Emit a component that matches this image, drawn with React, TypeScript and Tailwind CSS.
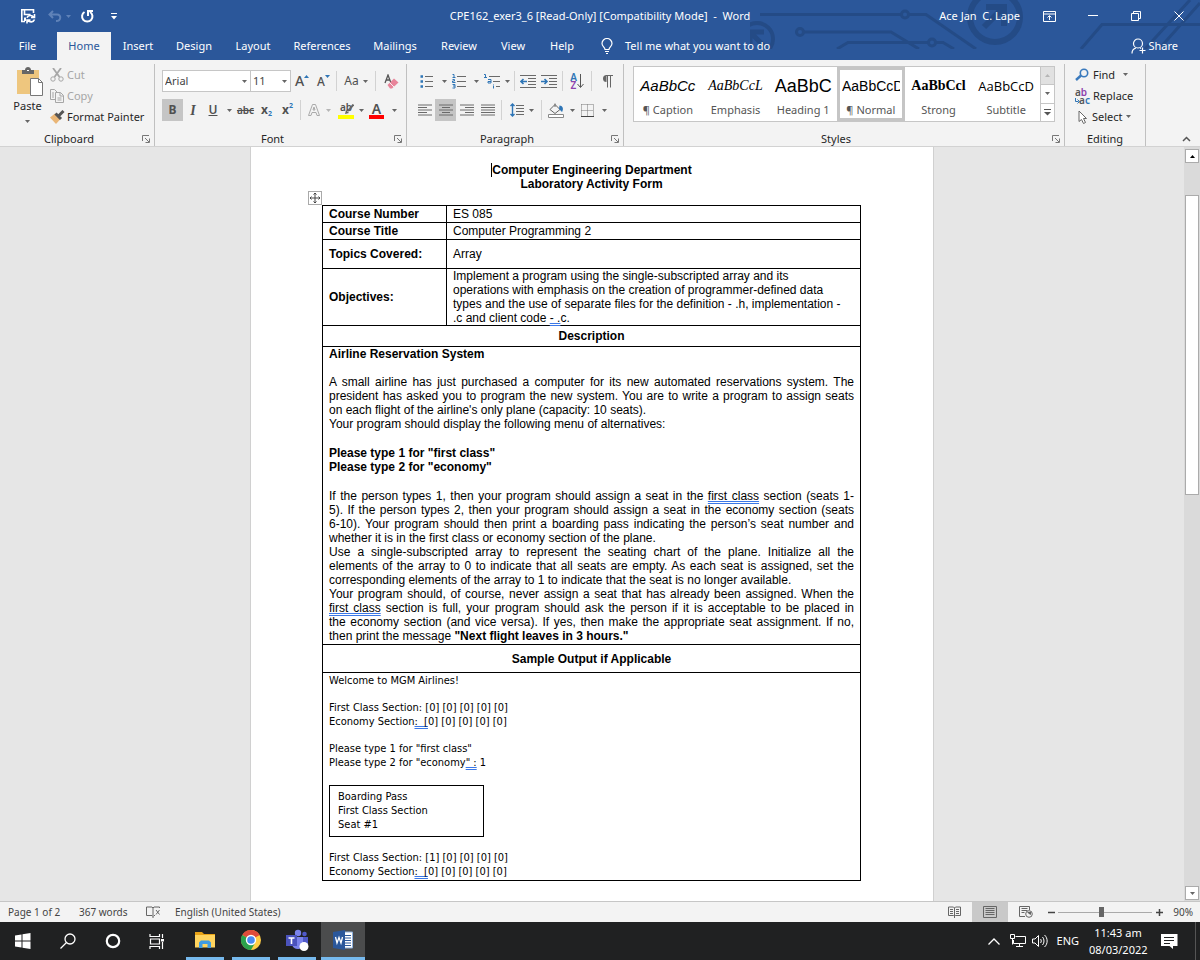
import type { ReactNode } from "react";

const tabs = [
  { label: "File", width: "w-[57px] pr-[2px]" },
  { label: "Home", width: "w-[54px]", active: true },
  { label: "Insert", width: "w-[54px]" },
  { label: "Design", width: "w-[58px]" },
  { label: "Layout", width: "w-[60px]" },
  { label: "References", width: "w-[78px]" },
  { label: "Mailings", width: "w-[68px]" },
  { label: "Review", width: "w-[60px]" },
  { label: "View", width: "w-12" },
  { label: "Help", width: "w-[50px]" },
];

const styles = [
  { name: "¶ Caption", sample: "AaBbCc", font: "font-['Liberation_Sans'] text-[15px] italic" },
  { name: "Emphasis", sample: "AaBbCcL", font: "font-['Liberation_Serif'] text-[14px] italic" },
  { name: "Heading 1", sample: "AaBbC", font: "font-['Liberation_Sans'] text-[18px]" },
  { name: "¶ Normal", sample: "AaBbCcD", font: "font-['Liberation_Sans'] text-[14px]", active: true },
  { name: "Strong", sample: "AaBbCcl", font: "font-['Liberation_Serif'] text-[14px] font-bold" },
  { name: "Subtitle", sample: "AaBbCcD", font: "font-['Open_Sans'] text-[13px] text-[#404040]" },
];

function Icon({
  w,
  h,
  children,
  className = "",
}: {
  w: number;
  h: number;
  children: ReactNode;
  className?: string;
}) {
  return (
    <svg
      width={w}
      height={h}
      viewBox={`0 0 ${w} ${h}`}
      fill="none"
      stroke="currentColor"
      aria-hidden="true"
      className={`shrink-0 ${className}`}
    >
      {children}
    </svg>
  );
}

function Caret({ className = "text-[#666]" }: { className?: string }) {
  return (
    <Icon w={5} h={3} className={className}>
      <path d="M0 0h5L2.500 3z" fill="currentColor" stroke="none" />
    </Icon>
  );
}

function Tool({
  label,
  className,
  children,
}: {
  label: string;
  className: string;
  children: ReactNode;
}) {
  return (
    <button
      type="button"
      aria-label={label}
      className={`flex h-[22px] shrink-0 items-center justify-center ${className}`}
    >
      {children}
    </button>
  );
}

function Divider({ className = "mx-[2px]" }: { className?: string }) {
  return <span className={`h-5 w-px shrink-0 bg-[#d2d2d2] ${className}`} />;
}

function Group({
  title,
  className,
  launcher = true,
  children,
}: {
  title: string;
  className: string;
  launcher?: boolean;
  children: ReactNode;
}) {
  return (
    <section className={`flex flex-col justify-between border-r border-[#c0c0c0] ${className}`}>
      {children}
      <div className="flex h-[14px] items-center">
        <h2 className="flex-1 text-center text-[11px] leading-[14px] text-[#262626]">{title}</h2>
        {launcher && (
          <button type="button" aria-label={`${title} settings`} className="flex w-4 justify-center">
            <Icon w={8} h={8} className="text-[#777]">
              <path d="M.5 6V.5H7M3 3l4 4M7.500 3.500v4h-4" />
            </Icon>
          </button>
        )}
      </div>
    </section>
  );
}

// text lines of an alignment icon, each given as [start, end]
function Lines({ rows }: { rows: number[][] }) {
  return (
    <Icon w={14} h={12} className="text-[#6a6a6a]">
      {rows.map(([a, b], i) => (
        <path key={i} d={`M${a} ${i * 2.5 + 1}H${b}`} />
      ))}
    </Icon>
  );
}

function Circuit() {
  return (
    <svg
      viewBox="0 0 450 49"
      width="450"
      height="49"
      fill="none"
      stroke="#244b86"
      strokeWidth="3"
      aria-hidden="true"
      className="pointer-events-none absolute top-0 right-0"
    >
      <circle cx="7" cy="39" r="16" strokeWidth="4" />
      <path d="M1 33l14 14M0 45V32h14" strokeWidth="5" />
      <path d="M10 14.500H151M159 14.500H176L226 49" />
      <circle cx="155" cy="14.500" r="3.500" />
      <circle cx="50" cy="32" r="3.500" />
      <path d="M54 32H141L169 49M87 49L98 42.500H178M186 42.500H193L204 49" />
      <circle cx="182" cy="42.500" r="3.500" />
      <circle cx="245" cy="17" r="25" strokeWidth="6" />
      <path d="M234 27L254 7M236 7H254V26" strokeWidth="6" />
      <path d="M331 49L352 24.500H450M395 49L440 0M409 49L450 3" />
    </svg>
  );
}

function TitleBar() {
  return (
    <div className="relative grid h-8 grid-cols-[1fr_auto_1fr] items-center text-[11px] text-white">
      <div className="flex items-center pl-5">
        <button type="button" aria-label="Save">
          <Icon w={16} h={16}>
            <path d="M5 13.500H1.800V1.800H13.500V5M4.500 2v4.500h6" strokeWidth="1.600" />
            <path d="M4 9.500h2V13H4z" fill="currentColor" stroke="none" />
            <path d="M7 9.800c1-3 5-3 6.500-.8M14.500 6v3.500H11M14.500 11.500c-1 3-5 3-6.500.8M7 15.500V12h3.500" strokeWidth="1.600" />
          </Icon>
        </button>
        <button type="button" aria-label="Undo" className="ml-3 flex items-center gap-1 text-[#5f82b8]">
          <Icon w={14} h={12}>
            <path d="M5 1L1.500 4.500 5 8M1.500 4.500H9c4.500 0 4.500 6.500-1 6.500" strokeWidth="2" />
          </Icon>
          <Caret className="text-[#5f82b8]" />
        </button>
        <button type="button" aria-label="Repeat" className="ml-[9px]">
          <Icon w={14} h={14}>
            <path d="M4.500 3A5.200 5.200 0 1 0 10 3M8 7V2h5" strokeWidth="2" />
          </Icon>
        </button>
        <button type="button" aria-label="Customize quick access" className="ml-[17px]">
          <Icon w={6} h={7}>
            <path d="M0 .5h6" />
            <path d="M0 3h6L3 6.500z" fill="currentColor" stroke="none" />
          </Icon>
        </button>
      </div>
      <h1 className="whitespace-pre">CPE162_exer3_6 [Read-Only] [Compatibility Mode]  -  Word</h1>
      <div className="flex items-center justify-end">
        <span className="mr-2 whitespace-pre">Ace Jan  C. Lape</span>
        <button type="button" aria-label="Ribbon display options" className="flex w-[43px] justify-center">
          <Icon w={13} h={11}>
            <path d="M.5.5h12v10H.5zM.5 3h12M6.500 9V5M4.500 6.500l2-2 2 2" />
          </Icon>
        </button>
        <button type="button" aria-label="Minimize" className="flex w-[43px] justify-center">
          <Icon w={10} h={10}>
            <path d="M0 4.500h10" />
          </Icon>
        </button>
        <button type="button" aria-label="Restore" className="flex w-[43px] justify-center">
          <Icon w={10} h={10}>
            <path d="M.5 2.500h7v7h-7zM2.500 2.500v-2h7v7h-2" />
          </Icon>
        </button>
        <button type="button" aria-label="Close" className="flex w-[43px] justify-center">
          <Icon w={10} h={10}>
            <path d="M.5.5l9 9M9.500.5l-9 9" />
          </Icon>
        </button>
      </div>
    </div>
  );
}

function TabRow() {
  return (
    <nav className="relative flex h-7 items-stretch text-[11px] text-white">
      {tabs.map((tab) => (
        <button
          key={tab.label}
          type="button"
          className={`${tab.width} ${tab.active ? "bg-[#f3f3f3] text-[#2b579a]" : ""}`}
        >
          {tab.label}
        </button>
      ))}
      <button type="button" className="ml-[14px] flex items-center gap-3">
        <Icon w={12} h={16}>
          <path d="M4 11.500C4 9 1 8.500 1 5.500a5 5 0 0 1 10 0c0 3-3 3.500-3 6zM4 13.500h4M5 15.500h2" strokeWidth="1.200" />
        </Icon>
        Tell me what you want to do
      </button>
      <button type="button" className="mr-[22px] ml-auto flex items-center gap-[2px]">
        <Icon w={15} h={16}>
          <circle cx="7" cy="5.500" r="4.500" strokeWidth="1.200" />
          <path d="M1 15.500c0-3 2-5 4-5.500M9 10l1 .5M11.500 9.500v6M8.500 12.500h6" strokeWidth="1.200" />
        </Icon>
        Share
      </button>
    </nav>
  );
}

function ClipboardGroup() {
  return (
    <Group title="Clipboard" className="w-[155px] shrink-0">
      <div className="flex pl-3">
        <button type="button" className="flex w-[31px] flex-col items-center pt-[3px] text-[11px] leading-[14px]">
          <Icon w={28} h={30} className="ml-1">
            <path d="M1 3h22v24H1z" fill="#eec67e" stroke="none" />
            <path d="M6 7V3h3c0-4 6-4 6 0h3v4z" fill="#666" stroke="none" />
            <path d="M11 3.500h2" stroke="#fff" />
            <path d="M14.500 11.500h8l4 4v13h-12z" fill="#fff" stroke="#777" />
            <path d="M22.500 11.500v4h4" stroke="#777" />
          </Icon>
          <span className="mt-[2px]">Paste</span>
          <span className="flex h-3 items-center pt-1">
            <Caret />
          </span>
        </button>
        <div className="flex flex-col pl-[7px] text-[11px] leading-[21px]">
          <button type="button" className="flex items-center gap-[3px] text-[#a6a6a6]">
            <Icon w={14} h={14}>
              <path d="M3 0l6.500 9M11 0L4.500 9" strokeWidth="1.800" />
              <circle cx="3" cy="11" r="2.200" />
              <circle cx="11" cy="11" r="2.200" />
            </Icon>
            Cut
          </button>
          <button type="button" className="flex items-center gap-[3px] text-[#a6a6a6]">
            <Icon w={14} h={14}>
              <path d="M5 10.500H.5V.5h4l3 3M2 4h2M2 6h2M2 8h2M5.500 3.500h5l3 3v7h-8zM10 3.500V7h3.500M7.500 9h4M7.500 11h4" />
            </Icon>
            Copy
          </button>
          <button type="button" className="flex items-center gap-[2px] whitespace-nowrap text-[#262626]">
            <Icon w={15} h={14}>
              <path d="M5 3.500L10.500 9 6 14 0 7.500z" fill="#eab676" stroke="none" />
              <path d="M5.500 3.500l5.500 5.500M9 5.500L13.500 1" stroke="#555" strokeWidth="3" />
            </Icon>
            Format Painter
          </button>
        </div>
      </div>
    </Group>
  );
}

function FontGroup() {
  return (
    <Group title="Font" className="w-[252px] shrink-0">
      <div className="flex flex-col gap-[7px] pt-[6px] pl-[7px] text-[#505050]">
        <div className="flex items-center">
          <div className="relative flex">
            <select
              aria-label="Font"
              className="h-[22px] w-[89px] appearance-none border border-[#c6c6c6] bg-white px-[2px] text-[11px] text-[#444]"
            >
              <option>Arial</option>
            </select>
            <span className="pointer-events-none absolute top-[10px] right-1">
              <Caret />
            </span>
          </div>
          <div className="relative -ml-px flex">
            <select
              aria-label="Font size"
              className="h-[22px] w-[41px] appearance-none border border-[#c6c6c6] bg-white px-[2px] text-[11px] text-[#444]"
            >
              <option>11</option>
            </select>
            <span className="pointer-events-none absolute top-[10px] right-1">
              <Caret />
            </span>
          </div>
          <Tool label="Grow font" className="w-[22px]">
            <span className="text-[14px] leading-none font-medium">A</span>
            <Icon w={5} h={12}>
              <path d="M0 3h5L2.500 0z" fill="#2e75b6" stroke="none" />
            </Icon>
          </Tool>
          <Tool label="Shrink font" className="w-[21px]">
            <span className="pt-[2px] text-[12px] leading-none font-medium">A</span>
            <Icon w={5} h={12}>
              <path d="M0 0h5L2.500 3z" fill="#2e75b6" stroke="none" />
            </Icon>
          </Tool>
          <Divider />
          <Tool label="Change case" className="w-[34px] gap-1 text-[12px]">
            Aa
            <Caret />
          </Tool>
          <Divider />
          <Tool label="Clear formatting" className="w-[26px]">
            <Icon w={15} h={15}>
              <path d="M1 9l3-8 3 8M2 6h4" stroke="#555" strokeWidth="1.300" />
              <path d="M3.500 11L10 4.500l4.500 4L8 14.500H6z" fill="#e8849a" stroke="none" />
              <path d="M5.500 8.500l4.500 4.500" stroke="#f3f3f3" />
            </Icon>
          </Tool>
        </div>
        <div className="flex items-center">
          <Tool label="Bold" className="w-[21px] bg-[#c5c5c5] text-[12px] font-bold">
            B
          </Tool>
          <Tool label="Italic" className="w-5 font-['Liberation_Serif'] text-[14px] font-bold italic">
            I
          </Tool>
          <Tool label="Underline" className="w-5 text-[12px] font-semibold underline">
            U
          </Tool>
          <Tool label="Underline style" className="w-3">
            <Caret />
          </Tool>
          <Tool label="Strikethrough" className="w-[21px] text-[10px] font-semibold line-through">
            abc
          </Tool>
          <Tool label="Subscript" className="w-[21px] text-[12px] font-bold">
            x<span className="pt-2 text-[7px] text-[#2e75b6]">2</span>
          </Tool>
          <Tool label="Superscript" className="w-[21px] text-[12px] font-bold">
            x<span className="pb-2 text-[7px] text-[#2e75b6]">2</span>
          </Tool>
          <Divider />
          <Tool label="Text effects" className="w-8 gap-[5px]">
            <Icon w={14} h={14}>
              <path d="M1.500 12.500l4-11h3l4 11H10L9 9.500H5l-1 3zM6 7h2L7 4z" stroke="#aaa" />
            </Icon>
            <Caret className="text-[#b5b5b5]" />
          </Tool>
          <Tool label="Highlight color" className="w-8 gap-[5px]">
            <span className="relative flex h-[17px] w-4 flex-col justify-between text-[10px] leading-[10px] font-semibold">
              ab
              <span className="h-1 w-4 bg-[#ffff00]" />
              <span className="absolute top-[2px] left-[6px]">
                <Icon w={10} h={10}>
                  <path d="M9.500.5L4 7" stroke="#666" strokeWidth="2" />
                  <path d="M1 10l1-4 3 3z" fill="#666" stroke="none" />
                </Icon>
              </span>
            </span>
            <Caret />
          </Tool>
          <Tool label="Font color" className="w-8 gap-2">
            <span className="flex h-[17px] w-[15px] flex-col items-center justify-between text-[14px] leading-[13px] font-semibold">
              A
              <span className="h-1 w-[15px] bg-[#ff0000]" />
            </span>
            <Caret />
          </Tool>
        </div>
      </div>
    </Group>
  );
}

function ParagraphGroup() {
  return (
    <Group title="Paragraph" className="w-[217px] shrink-0">
      <div className="flex flex-col gap-[7px] pt-[6px] pl-2 text-[#505050]">
        <div className="flex items-center pl-[2px]">
          <Tool label="Bullets" className="w-8 gap-2">
            <Icon w={14} h={14}>
              <path d="M5 2.500h8M5 7.500h8M5 12.500h8" stroke="#6a6a6a" />
              <path d="M.5 2.500H3M.5 7.500H3M.5 12.500H3" stroke="#2e75b6" strokeWidth="2.500" />
            </Icon>
            <Caret />
          </Tool>
          <Tool label="Numbering" className="w-8 gap-2">
            <Icon w={14} h={16}>
              <path d="M5 3.500h9M5 8.500h9M5 13.500h9" stroke="#6a6a6a" />
              <path d="M.5 1.500H2v3M.5 4.500h3M.5 6.500h2v1.500H.500v1.500h3M.5 11.500h2.500v3.500H.500M1 13h2" stroke="#2e75b6" />
            </Icon>
            <Caret />
          </Tool>
          <Tool label="Multilevel list" className="w-[31px] gap-[5px]">
            <Icon w={16} h={16}>
              <path d="M5 3.500h11M9 8.500h7M12 13.500h4" stroke="#6a6a6a" />
              <path d="M0 1.500h1.500v3M0 4.500h3M4 6.500h3v3.500H4V8.500h3M9.500 11v.5M9.500 12.500v3" stroke="#2e75b6" />
            </Icon>
            <Caret />
          </Tool>
          <Divider />
          <Tool label="Decrease indent" className="w-[21px]">
            <Icon w={16} h={13}>
              <path d="M0 .5h16M8 3.500h8M8 6.500h8M8 9.500h8M0 12.500h16" stroke="#6a6a6a" />
              <path d="M1 6.500h6M3.500 4L1 6.500 3.500 9" stroke="#2e75b6" strokeWidth="1.600" />
            </Icon>
          </Tool>
          <Tool label="Increase indent" className="w-[22px]">
            <Icon w={16} h={13}>
              <path d="M0 .5h16M8 3.500h8M8 6.500h8M8 9.500h8M0 12.500h16" stroke="#6a6a6a" />
              <path d="M0 6.500h6M3.500 4L6 6.500 3.500 9" stroke="#2e75b6" strokeWidth="1.600" />
            </Icon>
          </Tool>
          <Divider />
          <Tool label="Sort" className="w-6">
            <span className="flex flex-col text-[10px] leading-[8px] font-semibold">
              <span className="text-[#2e75b6]">A</span>
              <span className="text-[#8e44ad]">Z</span>
            </span>
            <Icon w={7} h={15}>
              <path d="M3.500 0v13M.5 10l3 3.500 3-3.500" stroke="#555" />
            </Icon>
          </Tool>
          <Divider />
          <Tool label="Show marks" className="w-[26px]">
            <Icon w={11} h={13}>
              <path d="M4.500 0a3.500 3.500 0 0 0 0 7z" fill="#666" stroke="none" />
              <path d="M4 .5h7M5.500 0v12.500M8.500 0v12.500" stroke="#666" />
            </Icon>
          </Tool>
        </div>
        <div className="flex items-center">
          <Tool label="Align left" className="w-5">
            <Lines rows={[[0, 14], [0, 9], [0, 14], [0, 9], [0, 14]]} />
          </Tool>
          <Tool label="Center" className="w-[21px] bg-[#c5c5c5]">
            <Lines rows={[[0, 14], [3, 11], [0, 14], [3, 11], [0, 14]]} />
          </Tool>
          <Tool label="Align right" className="w-[21px]">
            <Lines rows={[[0, 14], [5, 14], [0, 14], [5, 14], [0, 14]]} />
          </Tool>
          <Tool label="Justify" className="w-[21px]">
            <Lines rows={[[0, 14], [0, 14], [0, 14], [0, 14], [0, 14]]} />
          </Tool>
          <Divider className="mx-[3px]" />
          <Tool label="Line spacing" className="w-[34px] gap-[5px]">
            <Icon w={14} h={14}>
              <path d="M6 2.500h8M6 5.500h8M6 8.500h8M6 11.500h8" stroke="#6a6a6a" />
              <path d="M2.500 1v12M.5 3l2-2 2 2M.5 11l2 2 2-2" stroke="#2e75b6" strokeWidth="1.400" />
            </Icon>
            <Caret />
          </Tool>
          <Divider />
          <Tool label="Shading" className="w-[34px] gap-[5px]">
            <Icon w={17} h={16}>
              <path d="M2 7.500l5-5 5 5-5 4zM7 5V1.500" stroke="#666" />
              <path d="M11.500 3.500c3 0 4.500 3 2.500 6.500L11 7z" fill="#2e75b6" stroke="none" />
              <path d="M.5 12.500h15v3H.500z" fill="#fff" stroke="#888" />
            </Icon>
            <Caret />
          </Tool>
          <Tool label="Borders" className="w-8 gap-2">
            <Icon w={13} h={13}>
              <path d="M.5.5h12v12M.5.5v12M6.500.5v12M.5 6.500h12" stroke="#777" strokeDasharray="1 1" />
              <path d="M0 12.500h13" stroke="#444" />
            </Icon>
            <Caret />
          </Tool>
        </div>
      </div>
    </Group>
  );
}

function StylesGroup() {
  return (
    <Group title="Styles" className="min-w-0 flex-1">
      <div className="mx-[9px] mt-[2px] flex h-14 border border-[#c6c6c6] bg-white">
        <div className="grid flex-1 grid-cols-6">
          {styles.map((style) => (
            <button
              key={style.name}
              type="button"
              className={`flex min-w-0 flex-col justify-between overflow-hidden ${
                style.active ? "border-[3px] border-[#c5c5c5] px-[2px]" : "px-[5px] py-[3px]"
              }`}
            >
              <span className={`h-8 w-full overflow-hidden text-center leading-8 whitespace-nowrap text-black ${style.font}`}>
                {style.sample}
              </span>
              <span className="w-full text-center text-[11px] leading-[16px] whitespace-nowrap text-[#555]">
                {style.name}
              </span>
            </button>
          ))}
        </div>
        <div className="flex w-[14px] flex-col divide-y divide-[#c6c6c6] border-l border-[#c6c6c6]">
          <button type="button" aria-label="Previous styles" className="flex flex-1 items-center justify-center bg-[#e1e1e1]">
            <Caret className="rotate-180 text-[#b5b5b5]" />
          </button>
          <button type="button" aria-label="Next styles" className="flex flex-1 items-center justify-center">
            <Caret />
          </button>
          <button type="button" aria-label="More styles" className="flex flex-1 items-center justify-center">
            <Icon w={7} h={7} className="text-[#555]">
              <path d="M0 .5h7" />
              <path d="M0 3h7L3.500 6.500z" fill="currentColor" stroke="none" />
            </Icon>
          </button>
        </div>
      </div>
    </Group>
  );
}

function EditingGroup() {
  return (
    <Group title="Editing" className="w-[81px] shrink-0" launcher={false}>
      <div className="flex flex-col pl-[10px] text-[11px] leading-[21px] text-[#262626]">
        <button type="button" className="flex items-center gap-1">
          <Icon w={14} h={14}>
            <circle cx="9" cy="5" r="3.700" stroke="#3a7abd" strokeWidth="1.600" />
            <path d="M6 7.500l-5 4.500" stroke="#3a7abd" strokeWidth="2.400" />
          </Icon>
          Find
          <span className="ml-1">
            <Caret />
          </span>
        </button>
        <button type="button" className="flex items-center gap-[3px]">
          <span className="relative flex w-[15px] flex-col text-[10px] leading-[8px] font-semibold text-[#555]">
            <span className="text-left">
              a<span className="text-[#8e44ad]">b</span>
            </span>
            <span className="text-right">
              a<span className="text-[#2e75b6]">c</span>
            </span>
            <span className="absolute bottom-0 left-0">
              <Icon w={5} h={6} className="text-[#2e75b6]">
                <path d="M.5 0v3.500h3M2.500 1.500l2 2-2 2" />
              </Icon>
            </span>
          </span>
          Replace
        </button>
        <button type="button" className="flex items-center gap-[3px]">
          <Icon w={14} h={14}>
            <path d="M4 1v10.500l2.500-2 2 4 2-1-2-4h3z" fill="#fff" stroke="#666" />
          </Icon>
          Select
          <Caret />
        </button>
      </div>
    </Group>
  );
}

function Ribbon() {
  return (
    <div className="flex h-[87px] border-b border-[#d2d2d2] bg-[#f3f3f3] pt-1 text-[#262626]">
      <ClipboardGroup />
      <FontGroup />
      <ParagraphGroup />
      <StylesGroup />
      <EditingGroup />
      <div className="flex w-[54px] shrink-0 items-end justify-end pr-[9px] pb-1">
        <button type="button" aria-label="Collapse ribbon">
          <Icon w={9} h={6} className="text-[#555]">
            <path d="M1 5l3.500-3.500L8 5" strokeWidth="1.500" />
          </Icon>
        </button>
      </div>
    </div>
  );
}

function Flag({ children }: { children: ReactNode }) {
  return (
    <span className="underline decoration-[#3b78e7] decoration-double decoration-1 underline-offset-1">
      {children}
    </span>
  );
}

function Blank({ className = "h-[15px]" }: { className?: string }) {
  return <div className={className} />;
}

// paragraph with fixed line breaks, every line but the last is justified
function Paragraph({ lines }: { lines: ReactNode[] }) {
  return (
    <p>
      {lines.map((line, i) => (
        <span
          key={i}
          className={`block ${i < lines.length - 1 ? "[text-align-last:justify]" : ""}`}
        >
          {line}
        </span>
      ))}
    </p>
  );
}

function Document() {
  return (
    <article className="w-[684px] border-x border-[#d0d0d0] bg-white pt-4 pr-[72px] pl-[71px] font-['Liberation_Sans',sans-serif] text-[12px] leading-[14px] text-black">
      <h2 className="text-center font-bold">
        <span className="border-l border-black">Computer Engineering Department</span>
        <br />
        Laboratory Activity Form
      </h2>
      <div className="relative mt-[14px]">
        <button
          type="button"
          aria-label="Move table"
          className="absolute -top-[14px] -left-[14px] flex size-[14px] items-center justify-center border border-[#aaa] bg-white"
        >
          <Icon w={12} h={12} className="text-[#444]">
            <path d="M6 1v10M1 6h10M4.500 2.500L6 1l1.500 1.500M4.500 9.500L6 11l1.500-1.500M2.500 4.500L1 6l1.500 1.500M9.500 4.500L11 6 9.500 7.500" />
          </Icon>
        </button>
        <table className="w-full table-fixed border-collapse [&_td]:border [&_td]:border-black [&_td]:px-[6px] [&_td]:py-0 [&_th]:border [&_th]:border-black [&_th]:px-[6px] [&_th]:py-0">
          <colgroup>
            <col className="w-[124px]" />
            <col />
          </colgroup>
          <tbody>
            <tr className="h-[17px]">
              <th scope="row" className="text-left">Course Number</th>
              <td>ES 085</td>
            </tr>
            <tr className="h-[17px]">
              <th scope="row" className="text-left">Course Title</th>
              <td>Computer Programming 2</td>
            </tr>
            <tr className="h-[29px]">
              <th scope="row" className="text-left">Topics Covered:</th>
              <td>Array</td>
            </tr>
            <tr className="h-[57px]">
              <th scope="row" className="text-left">Objectives:</th>
              <td>
                Implement a program using the single-subscripted array and its
                <br />
                operations with emphasis on the creation of programmer-defined data
                <br />
                types and the use of separate files for the definition - .h, implementation -
                <br />
                .c and client code <Flag>- .</Flag>c.
              </td>
            </tr>
            <tr className="h-[21px]">
              <th colSpan={2}>Description</th>
            </tr>
            <tr>
              <td colSpan={2}>
                <p className="font-bold">Airline Reservation System</p>
                <Blank className="h-[14px]" />
                <Paragraph
                  lines={[
                    "A small airline has just purchased a computer for its new automated reservations system. The",
                    "president has asked you to program the new system. You are to write a program to assign seats",
                    "on each flight of the airline's only plane (capacity: 10 seats).",
                  ]}
                />
                <p>Your program should display the following menu of alternatives:</p>
                <Blank />
                <p className="font-bold">
                  Please type 1 for "first class"
                  <br />
                  Please type 2 for "economy"
                </p>
                <Blank />
                <Paragraph
                  lines={[
                    <>
                      If the person types 1, then your program should assign a seat in the{" "}
                      <Flag>first class</Flag> section (seats 1-
                    </>,
                    "5). If the person types 2, then your program should assign a seat in the economy section (seats",
                    "6-10). Your program should then print a boarding pass indicating the person’s seat number and",
                    "whether it is in the first class or economy section of the plane.",
                  ]}
                />
                <Paragraph
                  lines={[
                    "Use a single-subscripted array to represent the seating chart of the plane. Initialize all the",
                    "elements of the array to 0 to indicate that all seats are empty. As each seat is assigned, set the",
                    "corresponding elements of the array to 1 to indicate that the seat is no longer available.",
                  ]}
                />
                <Paragraph
                  lines={[
                    "Your program should, of course, never assign a seat that has already been assigned. When the",
                    <>
                      <Flag>first class</Flag> section is full, your program should ask the person if it is
                      acceptable to be placed in
                    </>,
                    "the economy section (and vice versa). If yes, then make the appropriate seat assignment. If no,",
                    <>
                      then print the message <b>"Next flight leaves in 3 hours."</b>
                    </>,
                  ]}
                />
                <Blank className="h-px" />
              </td>
            </tr>
            <tr className="h-7">
              <th colSpan={2}>Sample Output if Applicable</th>
            </tr>
            <tr>
              <td colSpan={2} className="font-['DejaVu_Sans_Condensed','DejaVu_Sans',sans-serif] text-[11px]">
                <p className="pt-px">Welcome to MGM Airlines!</p>
                <Blank className="h-[13px]" />
                <p>First Class Section: [0] [0] [0] [0] [0]</p>
                <p className="whitespace-pre">
                  Economy Section<Flag>{":  ["}</Flag>0] [0] [0] [0] [0]
                </p>
                <Blank className="h-[13px]" />
                <p>Please type 1 for "first class"</p>
                <p>
                  Please type 2 for "economy<Flag>" :</Flag> 1
                </p>
                <div className="mt-[15px] mb-[14px] w-[155px] border border-black px-2 py-1">
                  <p>Boarding Pass</p>
                  <p>First Class Section</p>
                  <p>Seat #1</p>
                </div>
                <p>First Class Section: [1] [0] [0] [0] [0]</p>
                <p className="pb-px whitespace-pre">
                  Economy Section<Flag>{":  ["}</Flag>0] [0] [0] [0] [0]
                </p>
              </td>
            </tr>
          </tbody>
        </table>
      </div>
    </article>
  );
}

function ScrollBar() {
  return (
    <div className="flex w-4 flex-col bg-[#dadada] px-px pt-[2px] pb-px">
      <button type="button" aria-label="Scroll up" className="flex h-[14px] items-center justify-center border border-[#ababab] bg-white">
        <Caret className="rotate-180" />
      </button>
      <div className="mt-8 h-[300px] border border-[#ababab] bg-white" />
      <button type="button" aria-label="Scroll down" className="mt-auto flex h-[14px] items-center justify-center border border-[#ababab] bg-white">
        <Caret />
      </button>
    </div>
  );
}

function StatusBar() {
  return (
    <footer className="flex h-[21px] items-center border-t border-[#c6c6c6] bg-[#f3f3f3] pr-[7px] pl-2 text-[10px] text-[#444]">
      <span className="w-[71px]">Page 1 of 2</span>
      <span className="w-[67px]">367 words</span>
      <button type="button" aria-label="Proofing" className="w-[29px]">
        <Icon w={14} h={12} className="text-[#666]">
          <path d="M7 10.500L6 9.500H.5V1H6l1 1v10M7 2l1-1h5.500v1M8 9.500h1M10 4l3.500 4.500M13.500 4L10 8.500" />
        </Icon>
      </button>
      <span>English (United States)</span>
      <div className="ml-auto flex items-center self-stretch">
        <button type="button" aria-label="Read mode" className="flex w-9 justify-center">
          <Icon w={13} h={12} className="text-[#666]">
            <path d="M6.500 10.500l-1-1h-5V1h5l1 1 1-1h5v8.500h-5zM6.500 2v10M2 3.500h3M2 5.500h3M2 7.500h3M8 3.500h3M8 5.500h3M8 7.500h3" />
          </Icon>
        </button>
        <button type="button" aria-label="Print layout" className="flex w-9 items-center justify-center self-stretch bg-[#c9c9c9]">
          <Icon w={14} h={12} className="text-[#666]">
            <path d="M.5.5h13v11H.500zM2.500 2.500h9M2.500 4.500h9M2.500 6.500h9M2.500 8.500h9" />
          </Icon>
        </button>
        <button type="button" aria-label="Web layout" className="flex w-9 justify-center">
          <Icon w={14} h={12} className="text-[#666]">
            <path d="M6 10.500H.5V.5h10V4M2.500 2.500h6M2.500 4.500h6M2.500 6.500h3" />
            <circle cx="10" cy="8" r="3.300" fill="#f3f3f3" />
            <path d="M8 6l2 2 2 1v-3z" fill="currentColor" stroke="none" />
          </Icon>
        </button>
        <button type="button" aria-label="Zoom out" className="flex w-[14px] justify-center">
          <Icon w={7} h={7}>
            <path d="M0 3.500h7" strokeWidth="1.500" />
          </Icon>
        </button>
        <input
          type="range"
          aria-label="Zoom"
          min={0}
          max={100}
          defaultValue={46}
          className="h-[10px] w-[94px] appearance-none bg-[linear-gradient(#aaa,#aaa)] bg-[length:100%_1px] bg-center bg-no-repeat [&::-webkit-slider-thumb]:h-[10px] [&::-webkit-slider-thumb]:w-[5px] [&::-webkit-slider-thumb]:appearance-none [&::-webkit-slider-thumb]:bg-[#666]"
        />
        <button type="button" aria-label="Zoom in" className="flex w-[14px] justify-center">
          <Icon w={7} h={7}>
            <path d="M0 3.500h7M3.500 0v7" strokeWidth="1.500" />
          </Icon>
        </button>
        <span className="w-[27px] text-right">90%</span>
      </div>
    </footer>
  );
}

function TaskApp({
  label,
  className = "w-[38px]",
  children,
}: {
  label: string;
  className?: string;
  children: ReactNode;
}) {
  return (
    <button
      type="button"
      aria-label={label}
      className={`flex h-full items-center justify-center border-b-[3px] border-[#76b9ed] ${className}`}
    >
      {children}
    </button>
  );
}

function TaskBar() {
  return (
    <div className="flex h-[38px] items-center bg-[#202122] text-[11px] text-white">
      <button type="button" aria-label="Start" className="flex w-[45px] justify-center">
        <Icon w={16} h={16}>
          <path d="M0 2.500l6.500-1v6H0zM7.500 1.300L15.500 0v7.500h-8zM0 8.500h6.500v6l-6.500-1zM7.500 8.500h8V16l-8-1.200z" fill="#fff" stroke="none" />
        </Icon>
      </button>
      <button type="button" aria-label="Search" className="flex w-[45px] justify-center">
        <Icon w={16} h={16}>
          <circle cx="10" cy="6" r="5" strokeWidth="1.300" />
          <path d="M6.500 9.500l-6 6" strokeWidth="1.300" />
        </Icon>
      </button>
      <button type="button" aria-label="Cortana" className="flex w-[45px] justify-center">
        <Icon w={16} h={16}>
          <circle cx="8" cy="8" r="6.200" strokeWidth="2.200" />
        </Icon>
      </button>
      <button type="button" aria-label="Task view" className="flex w-11 justify-center">
        <Icon w={16} h={16}>
          <path d="M1 1v2.500h9.500V1M1.500 6h9v5h-9zM1 16v-2.500h9.500V16M13.500 1v4M13.500 9v7" strokeWidth="1.200" />
          <path d="M12 6h3v2.500h-3z" fill="#fff" stroke="none" />
        </Icon>
      </button>
      <div className="ml-[7px] flex h-full gap-2">
        <TaskApp label="File Explorer">
          <Icon w={20} h={17}>
            <path d="M0 1h7l2 2h11v13H0z" fill="#e8a317" stroke="none" />
            <path d="M0 4h20v12.500H0z" fill="#ffd45e" stroke="none" />
            <path d="M4 17v-5.500L6 9.500h8l2 2V17h-3.500v-4h-5v4z" fill="#3f9be0" stroke="none" />
          </Icon>
        </TaskApp>
        <TaskApp label="Chrome">
          <Icon w={20} h={20}>
            <circle cx="10" cy="10" r="10" fill="#ffcd46" stroke="none" />
            <path d="M10 10L1.300 5a10 10 0 0 1 17.400 0z" fill="#de4b3b" stroke="none" />
            <path d="M10 10L1.300 5A10 10 0 0 0 10 20l4-7z" fill="#2ba24c" stroke="none" />
            <circle cx="10" cy="10" r="4.500" fill="#4a8af4" stroke="#fff" strokeWidth="1.400" />
          </Icon>
        </TaskApp>
        <TaskApp label="Teams">
          <Icon w={24} h={22}>
            <circle cx="13" cy="4" r="3.200" fill="#7b83eb" stroke="none" />
            <circle cx="19.500" cy="5" r="2.300" fill="#5059c9" stroke="none" />
            <path d="M16 8h7v6c0 3-3 5-6 4z" fill="#5059c9" stroke="none" />
            <path d="M7 8h11v7c0 6-9 7-11 1z" fill="#7b83eb" stroke="none" />
            <path d="M1 6h11v11H1z" fill="#4b53bc" stroke="none" />
            <path d="M3.500 9h6M6.500 9v6" stroke="#fff" strokeWidth="1.600" />
            <circle cx="19" cy="17.500" r="4.500" fill="#fff" stroke="none" />
          </Icon>
        </TaskApp>
      </div>
      <TaskApp label="Word" className="ml-[5px] w-[44px] bg-[#4b4c4d]">
        <Icon w={20} h={20}>
          <path d="M9 2h10.500v16H9z" fill="#fff" stroke="#8fb0dd" />
          <path d="M12 5.500h6M12 8h6M12 10.500h6M12 13h6M12 15.500h6" stroke="#2b579a" />
          <path d="M0 2l12-2v20L0 18z" fill="#2b579a" stroke="none" />
          <path d="M2.500 7l1.500 6 2-5.500 2 5.500 1.500-6" stroke="#fff" strokeWidth="1.300" />
        </Icon>
      </TaskApp>
      <div className="ml-auto flex h-full items-center">
        <button type="button" aria-label="Hidden icons">
          <Icon w={12} h={7}>
            <path d="M.5 6.500L6 1l5.500 5.500" strokeWidth="1.300" />
          </Icon>
        </button>
        <Icon w={16} h={14} className="ml-[10px]">
          <path d="M5.500 2.500h10v7h-12V6M6 12.500h7M9.500 9.500v3M.5.5h4v4h-4zM2.500 4.500v6" />
        </Icon>
        <Icon w={16} h={14} className="ml-[6px]">
          <path d="M.5 5h2.500l3.500-3.500v11L3 9H.500zM8.500 5c1 1 1 3 0 4M10.500 3c2 2 2 6 0 8M12.500 1c3.500 3 3.500 9 0 12" />
        </Icon>
        <span className="ml-[9px]">ENG</span>
        <time className="ml-[10px] w-[58px] text-center leading-[17px]">
          11:43 am
          <br />
          08/03/2022
        </time>
        <button type="button" aria-label="Notifications" className="ml-[14px]">
          <Icon w={17} h={16}>
            <path d="M0 1h16.500v12H12v3l-3.500-3H0z" fill="#fff" stroke="none" />
            <path d="M3 4.500h10M3 7.500h10M3 10.500h6" stroke="#202122" />
          </Icon>
        </button>
        <span className="mr-1 ml-[17px] h-full w-px bg-[#555]" />
      </div>
    </div>
  );
}

export default function App() {
  return (
    <div className="flex min-h-screen flex-col bg-[#e6e6e6] font-['Noto_Sans','Open_Sans',sans-serif]">
      <header className="relative overflow-hidden bg-[#2b579a]">
        <Circuit />
        <TitleBar />
        <TabRow />
      </header>
      <Ribbon />
      <main className="flex flex-1">
        <div className="flex flex-1 justify-center">
          <Document />
        </div>
        <ScrollBar />
      </main>
      <StatusBar />
      <TaskBar />
    </div>
  );
}
